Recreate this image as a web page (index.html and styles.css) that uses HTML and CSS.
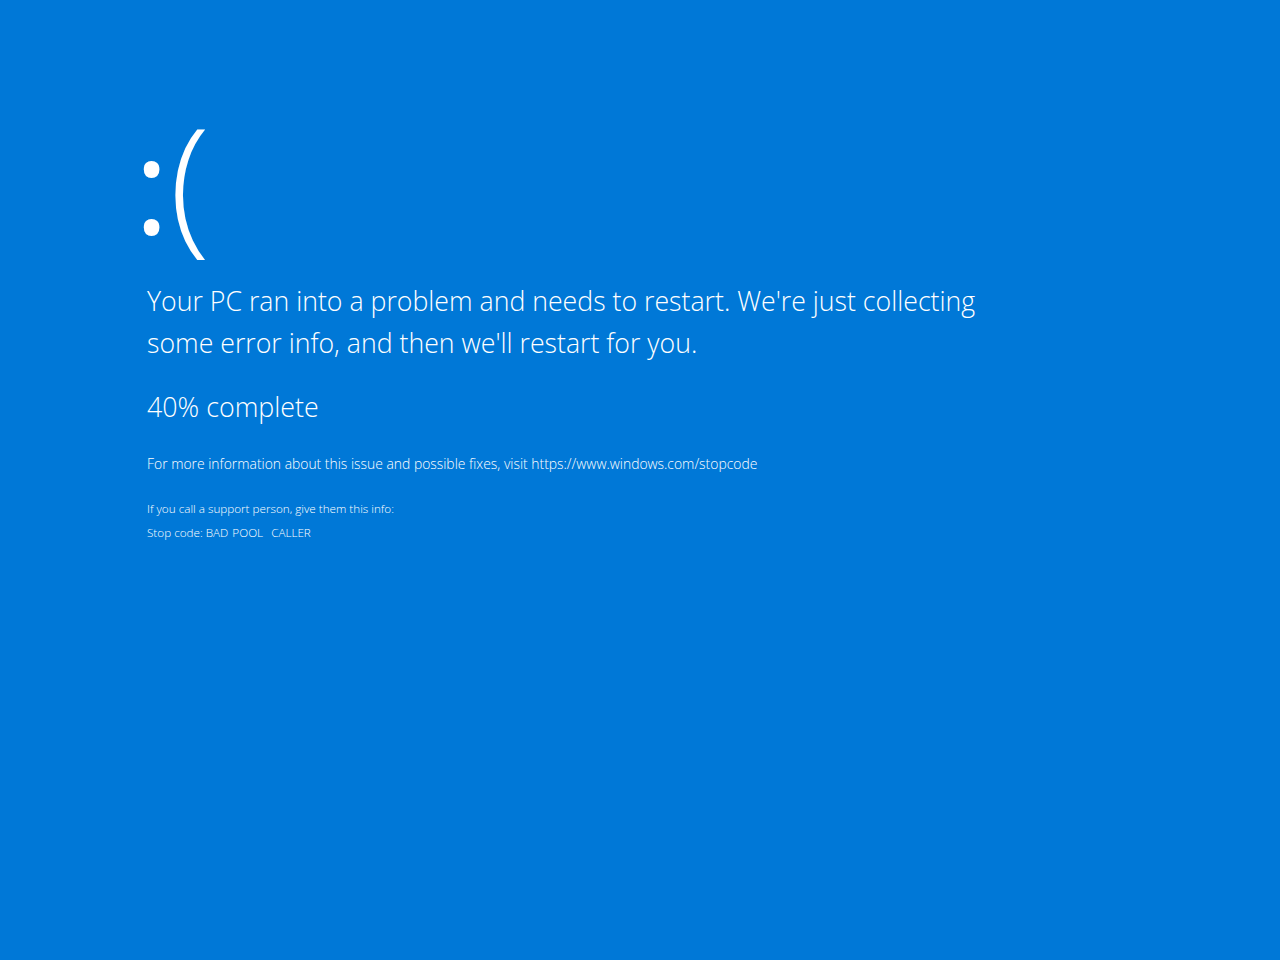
FILE: index.html
```html
<!DOCTYPE html>
<html lang="en">
<head>
<meta charset="utf-8">
<title>Blue screen</title>
<link rel="stylesheet" href="styles.css">
</head>
<body>
<main class="screen">
  <div class="face"><span class="colon">:</span><span class="paren">(</span></div>
  <p class="message">Your PC ran into a problem and needs to restart. We're just collecting<br>some error info, and then we'll restart for you.</p>
  <p class="progress">40% complete</p>
  <p class="info">For more information about this issue and possible fixes, visit https://www.windows.com/stopcode</p>
  <div class="support">
    <p class="small">If you call a support person, give them this info:</p>
    <p class="small">Stop code: <span class="code">BAD POOL&nbsp; CALLER</span></p>
  </div>
</main>
</body>
</html>
```
FILE: styles.css
```css
html, body {
  margin: 0;
  padding: 0;
  height: 100%;
  background: #0078d7;
}
body {
  color: #ffffff;
  font-family: "Open Sans", "Noto Sans", sans-serif;
  font-weight: 300;
}
.screen {
  padding: 83px 0 0 147px;
  display: flex;
  flex-direction: column;
}
.face {
  font-size: 150px;
  line-height: 191px;
  font-weight: 300;
  margin-left: -13px;
  white-space: nowrap;
}
.colon {
  font-size: 134px;
  font-weight: 400;
  margin-right: 0;
  position: relative;
  top: -2px;
}
.message {
  margin: 0;
  font-size: 26.7px;
  line-height: 42px;
}
.progress {
  margin: 22px 0 0 0;
  font-size: 26.8px;
  line-height: 42px;
}
.info {
  margin: 26px 0 0 0;
  font-size: 13.9px;
  line-height: 20px;
}
.support {
  margin-top: 25px;
  display: flex;
  flex-direction: column;
  gap: 6px;
}
.small {
  margin: 0;
  font-size: 11.7px;
  line-height: 18px;
}
.code {
  word-spacing: 1px;
}
```
